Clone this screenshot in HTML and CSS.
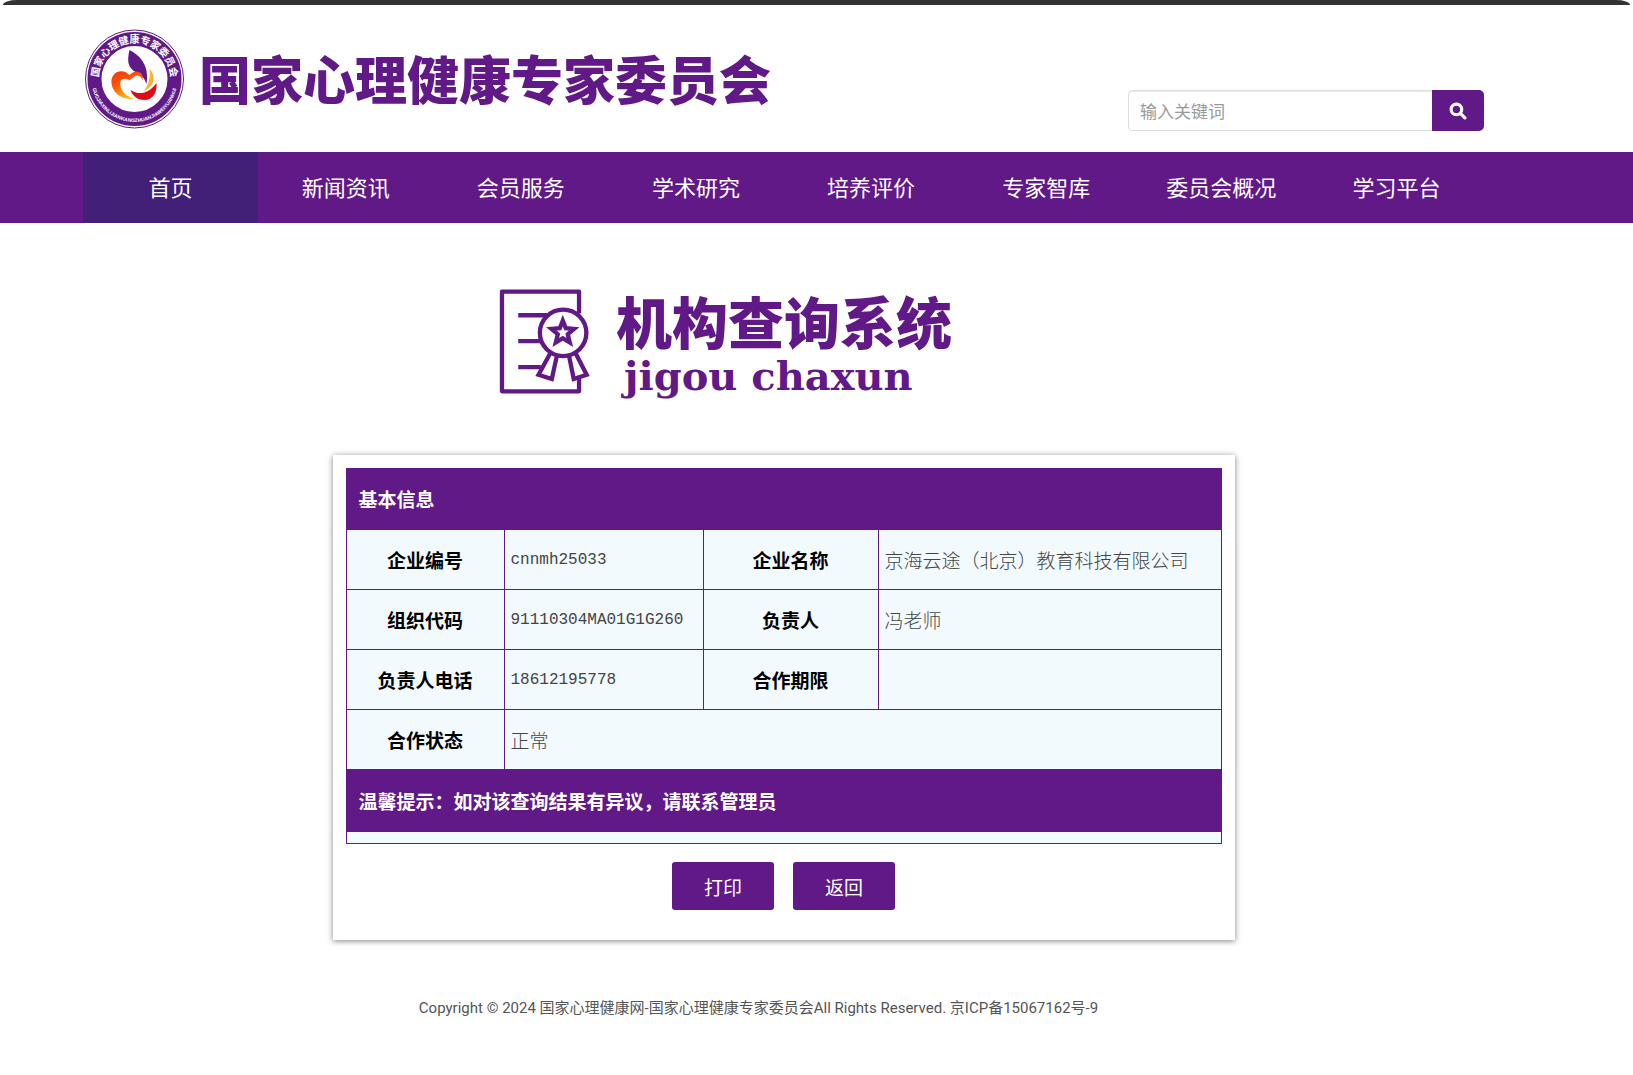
FILE: index.html
```html
<!DOCTYPE html>
<html lang="zh-CN">
<head>
  <meta charset="UTF-8">
  <title>机构查询系统</title>
  <link rel="stylesheet" href="styles.css">
</head>
<body>

<div class="topbar"></div>

<!-- Header -->
<header class="wrap header">
  <div class="logo">
    <svg class="emblem" viewBox="0 0 100 100" role="img" aria-label="国家心理健康专家委员会">
      <defs>
        <linearGradient id="heart" x1="0" y1="0" x2="0.5" y2="1">
          <stop offset="0" stop-color="#f8310a"/>
          <stop offset="0.5" stop-color="#fb5a08"/>
          <stop offset="1" stop-color="#fdc21c"/>
        </linearGradient>
        <path id="arc-top" d="M14 50 A36 36 0 0 1 86 50"/>
        <path id="arc-bottom" d="M7 50 A43 43 0 0 0 93 50"/>
      </defs>
      <circle cx="50" cy="50" r="49" fill="#fff" stroke="#611987" stroke-width="1"/>
      <circle cx="50" cy="50" r="40" fill="none" stroke="#611987" stroke-width="14"/>
      <text class="emblem-cn"><textPath href="#arc-top" startOffset="50%" text-anchor="middle">国家心理健康专家委员会</textPath></text>
      <text class="emblem-en"><textPath href="#arc-bottom" startOffset="50%" text-anchor="middle">GUOJIAXINLIJIANKANGZHUANJIAWEIYUANHUI</textPath></text>
      <path d="M45 21 C57 27 65 38 62 55 C60 49 57 46 51 43 C44 39 42 33 45 21 Z" fill="#611987"/>
      <path d="M65 40 C72 47 70 58 59 62 C64 56 66 50 65 40 Z" fill="#fbb424"/>
      <path d="M72 54 C73 65 67 71 60 71 C53 71 48 67 46 61 C55 67 65 64 72 54 Z" fill="#e10a17"/>
      <path d="M58 52 C57 47 53 44 48 49 L45 51 L42 50 C37 49 35 52 36 57 C37 63 42 67 50 70 C37 71 28 64 27 54 C26 45 34 40 41 43 L45 46 C52 39 60 43 58 52 Z" fill="url(#heart)"/>
    </svg>
    <span class="logo-text">国家心理健康专家委员会</span>
  </div>
  <form class="search">
    <input type="text" placeholder="输入关键词" aria-label="输入关键词">
    <button type="button" aria-label="搜索">
      <svg width="18" height="18" viewBox="0 0 17 17">
        <circle cx="7" cy="7" r="5" fill="none" stroke="#fff" stroke-width="3"/>
        <path d="M11 11 L15 15" stroke="#fff" stroke-width="3" stroke-linecap="round"/>
      </svg>
    </button>
  </form>
</header>

<!-- Nav -->
<nav class="nav">
  <div class="wrap nav-list">
    <a class="active" href="#">首页</a>
    <a href="#">新闻资讯</a>
    <a href="#">会员服务</a>
    <a href="#">学术研究</a>
    <a href="#">培养评价</a>
    <a href="#">专家智库</a>
    <a href="#">委员会概况</a>
    <a href="#">学习平台</a>
  </div>
</nav>

<main class="wrap">
  <div class="title">
    <!-- certificate with rosette -->
    <svg class="title-icon" viewBox="60 56 272 316" fill="none" stroke="#611987" stroke-width="13">
      <path d="M300 130 V64 H68 V364 H300 V326" stroke-linejoin="round"/>
      <path d="M117 135 H205 M117 213 H185 M117 291 H185"/>
      <circle cx="252" cy="188" r="70"/>
      <path d="M213 250 L178 314 L218 327 L233 258 M290 250 L323 314 L284 327 L270 258"/>
      <path d="M251 151 L260 174 L285 176 L266 192 L272 217 L251 204 L230 217 L236 192 L217 176 L242 174 Z"/>
    </svg>
    <div class="title-text">
      <h1>机构查询系统</h1>
      <p>jigou chaxun</p>
    </div>
  </div>

  <!-- Result -->
  <div class="card">
    <table>
      <colgroup>
        <col class="col-a"><col class="col-b"><col class="col-c"><col>
      </colgroup>
      <tr>
        <th class="bar" colspan="4">基本信息</th>
      </tr>
      <tr>
        <th>企业编号</th>
        <td class="code">cnnmh25033</td>
        <th>企业名称</th>
        <td>京海云途（北京）教育科技有限公司</td>
      </tr>
      <tr>
        <th>组织代码</th>
        <td class="code">91110304MA01G1G260</td>
        <th>负责人</th>
        <td>冯老师</td>
      </tr>
      <tr>
        <th>负责人电话</th>
        <td class="code">18612195778</td>
        <th>合作期限</th>
        <td></td>
      </tr>
      <tr>
        <th>合作状态</th>
        <td colspan="3">正常</td>
      </tr>
      <tr>
        <th class="bar tips" colspan="4">温馨提示：如对该查询结果有异议，请联系管理员</th>
      </tr>
      <tr class="last">
        <td colspan="4"></td>
      </tr>
    </table>
    <div class="actions">
      <button type="button" onclick="window.print()">打印</button>
      <button type="button" onclick="history.back()">返回</button>
    </div>
  </div>
</main>

<footer class="wrap footer">
  Copyright © 2024 国家心理健康网-国家心理健康专家委员会All Rights Reserved. 京ICP备15067162号-9
</footer>

</body>
</html>
```
FILE: styles.css
```css
* {
  box-sizing: border-box;
}
body {
  margin: 0;
  background: #fff;
  font-family: "Noto Sans CJK SC", sans-serif;
  color: #555;
}
.topbar {
  height: 5px;
  margin: 0 3px;
  background: #333;
  border-radius: 14px 14px 0 0 / 5px 5px 0 0;
}
.wrap {
  padding-left: 83px;
  padding-right: 149px;
}

/* header */
.header {
  display: flex;
  justify-content: space-between;
  align-items: flex-end;
  padding-top: 24px;
  padding-bottom: 21px;
}
.logo {
  display: flex;
  align-items: center;
  gap: 13px;
  padding-bottom: 2px;
}
.emblem {
  width: 103px;
  height: 100px;
}
.emblem-cn {
  font-size: 10px;
  font-weight: bold;
  fill: #fff;
}
.emblem-en {
  font-family: "Liberation Sans", sans-serif;
  font-size: 5px;
  font-weight: bold;
  fill: #fff;
}
.logo-text {
  padding-bottom: 2px;
  font-size: 52px;
  font-weight: 900;
  line-height: 60px;
  color: #611987;
  white-space: nowrap;
}
.search {
  display: flex;
  width: 356px;
  height: 41px;
}
.search input {
  flex: 1;
  min-width: 0;
  padding: 0 11px;
  border: 1px solid #ddd;
  border-right: none;
  border-radius: 5px 0 0 5px;
  box-shadow: inset 0 1px 1px rgba(0,0,0,0.08);
  font-family: "Noto Sans CJK SC", sans-serif;
  font-size: 17px;
}
.search input::placeholder {
  color: #999;
}
.search button {
  display: flex;
  align-items: center;
  justify-content: center;
  width: 52px;
  border: none;
  border-radius: 0 5px 5px 0;
  background: #611987;
  cursor: pointer;
}

/* nav */
.nav {
  background: #611987;
}
.nav-list {
  display: flex;
}
.nav-list a {
  flex: 1;
  padding-bottom: 2px;
  font-size: 22px;
  line-height: 69px;
  text-align: center;
  text-decoration: none;
  color: #fff;
}
.nav-list a.active,
.nav-list a:hover {
  background: #432078;
}

/* title */
.title {
  display: flex;
  justify-content: center;
  gap: 26px;
  padding: 66px 116px 54px 0;
}
.title-icon {
  width: 91px;
  height: 105px;
}
.title-text {
  color: #611987;
}
.title-text h1 {
  margin: 0;
  font-size: 56px;
  font-weight: 900;
  line-height: 62px;
}
.title-text p {
  margin: 0;
  padding-left: 8px;
  font-family: "DejaVu Serif", serif;
  font-size: 40px;
  font-weight: bold;
  line-height: 50px;
}

/* result card */
.card {
  max-width: 902px;
  margin: 0 auto;
  padding: 13px 13px 30px;
  background: #fff;
  box-shadow: 0 1px 6px rgba(0,0,0,0.5);
}
table {
  width: 100%;
  table-layout: fixed;
  border-collapse: collapse;
  background: #f2fafe;
}
.col-a {
  width: 158px;
}
.col-b {
  width: 199px;
}
.col-c {
  width: 175px;
}
th,
td {
  height: 60px;
  padding: 0 6px;
  border: 1px solid #611987;
  font-size: 19px;
  line-height: 28px;
}
th {
  color: #000;
}
td {
  font-weight: 300;
  color: #444;
  text-align: left;
}
th.bar {
  height: 61px;
  padding: 0 12px;
  background: #611987;
  color: #fff;
  text-align: left;
}
th.tips {
  height: 62px;
}
td.code {
  font-family: "Liberation Mono", monospace;
  font-size: 16px;
}
.last td {
  height: 12px;
  padding: 0;
}
.actions {
  display: flex;
  justify-content: center;
  gap: 19px;
  padding-top: 18px;
}
.actions button {
  width: 102px;
  height: 48px;
  border: none;
  border-radius: 3px;
  background: #611987;
  color: #fff;
  font-family: "Noto Sans CJK SC", sans-serif;
  font-size: 19px;
  cursor: pointer;
}

.footer {
  padding-top: 56px;
  padding-right: 199px;
  font-family: Roboto, "Noto Sans CJK SC", sans-serif;
  font-size: 15px;
  line-height: 24px;
  text-align: center;
}
```
